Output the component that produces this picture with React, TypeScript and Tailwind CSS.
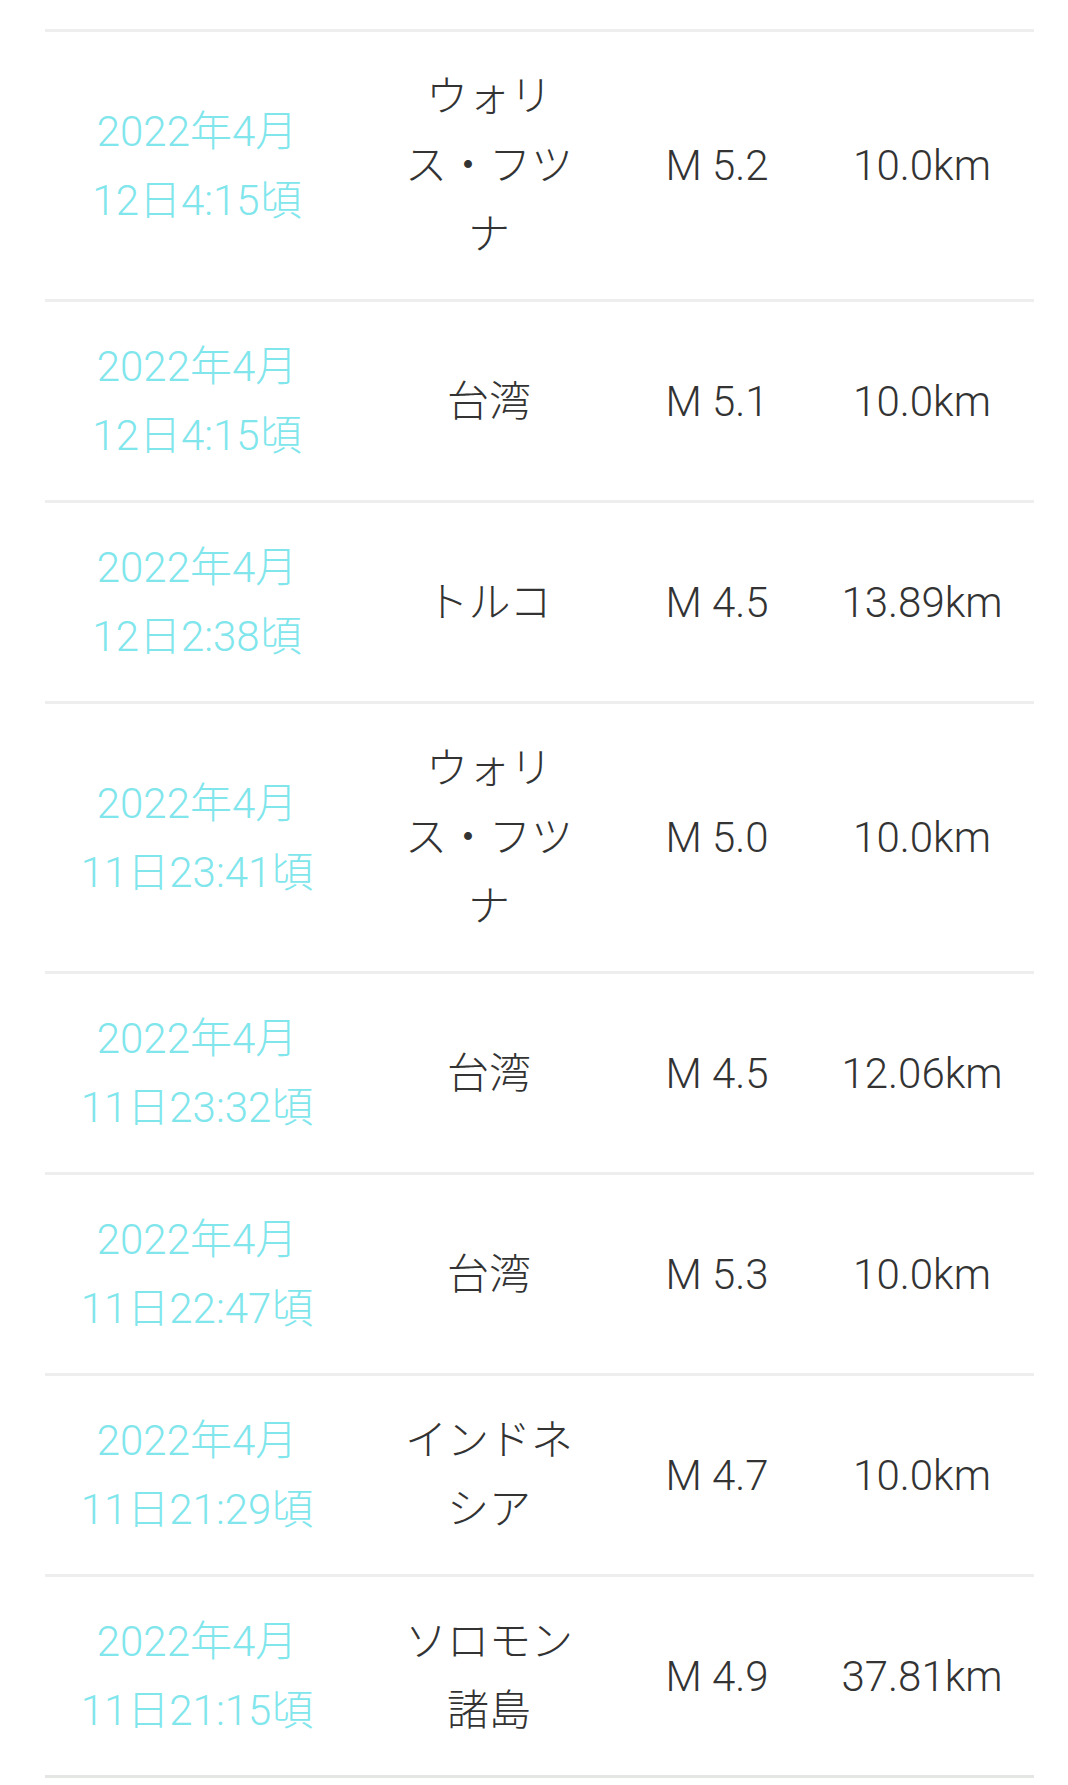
import React from 'react'

type Quake = {
  date: string
  time: string
  place: string
  mag: string
  depth: string
}

const quakes: Quake[] = [
  { date: '2022年4月', time: '12日4:15頃', place: 'ウォリス・フツナ', mag: 'M 5.2', depth: '10.0km' },
  { date: '2022年4月', time: '12日4:15頃', place: '台湾', mag: 'M 5.1', depth: '10.0km' },
  { date: '2022年4月', time: '12日2:38頃', place: 'トルコ', mag: 'M 4.5', depth: '13.89km' },
  { date: '2022年4月', time: '11日23:41頃', place: 'ウォリス・フツナ', mag: 'M 5.0', depth: '10.0km' },
  { date: '2022年4月', time: '11日23:32頃', place: '台湾', mag: 'M 4.5', depth: '12.06km' },
  { date: '2022年4月', time: '11日22:47頃', place: '台湾', mag: 'M 5.3', depth: '10.0km' },
  { date: '2022年4月', time: '11日21:29頃', place: 'インドネシア', mag: 'M 4.7', depth: '10.0km' },
  { date: '2022年4月', time: '11日21:15頃', place: 'ソロモン諸島', mag: 'M 4.9', depth: '37.81km' },
]

export default function App() {
  return (
    <div
      className="min-h-[1785px] bg-white pt-[29px] pl-[45px] pr-[34px] font-light"
      style={{ fontFamily: 'Roboto, "Noto Sans CJK JP", sans-serif' }}
    >
      <div className="border-b-[3px] border-[#e4e6e4]">
        {quakes.map((q, i) => (
          <div
            key={i}
            className="grid grid-cols-[304px_280px_176px_229px] items-center border-t-[3px] border-[#eeeeee] py-[30px] text-[42px] leading-[69px] text-center"
          >
            <div className="text-[#80e6ec]">
              <span className="block">{q.date}</span>
              <span className="block">{q.time}</span>
            </div>
            <div className="px-[50px] text-[#333333]">{q.place}</div>
            <div className="text-[#333333]">{q.mag}</div>
            <div className="pl-[5px] text-[#333333]">{q.depth}</div>
          </div>
        ))}
      </div>
    </div>
  )
}
